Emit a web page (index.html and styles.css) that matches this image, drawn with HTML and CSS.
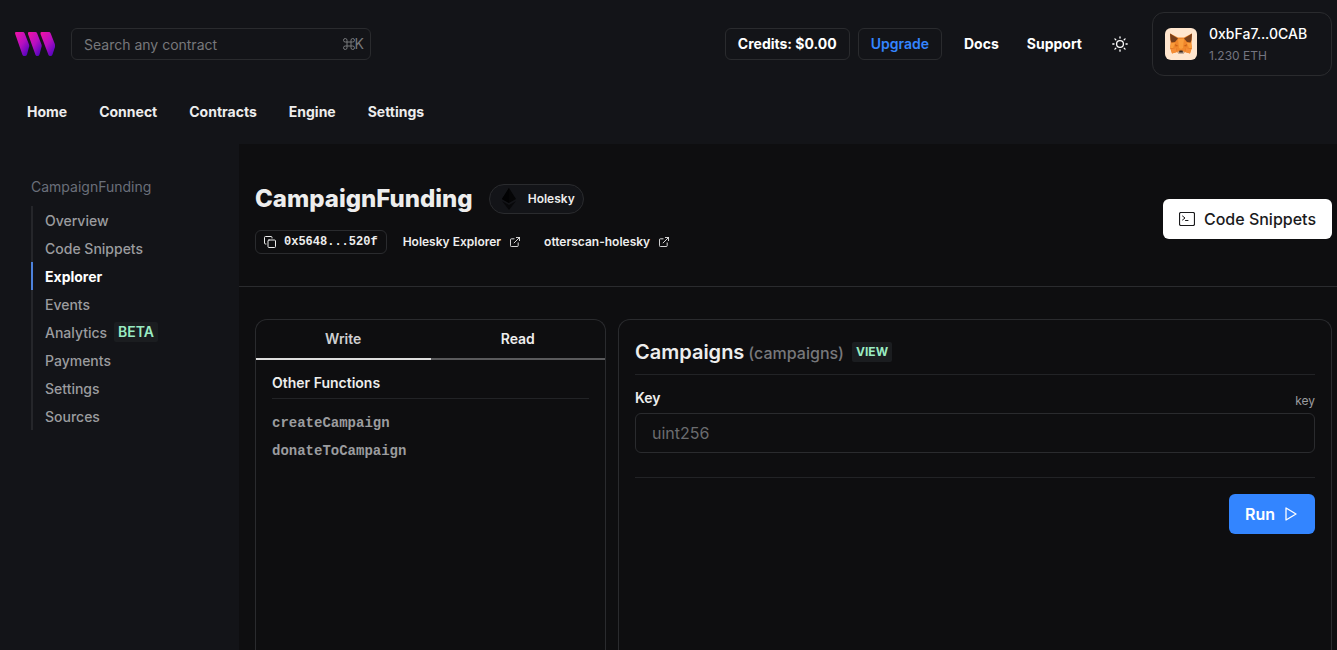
FILE: index.html
```html
<!DOCTYPE html>
<html lang="en">
<head>
<meta charset="utf-8">
<meta name="viewport" content="width=device-width, initial-scale=1">
<title>CampaignFunding | Explorer</title>
<link rel="stylesheet" href="styles.css">
</head>
<body>
<div class="page">
  <header class="topbar">
    <a class="logo" href="#" aria-label="Dashboard home">
      <svg width="40" height="24" viewBox="0 0 40 24">
        <defs>
          <linearGradient id="brand" x1="0" y1="0" x2="0.8" y2="1">
            <stop offset="0" stop-color="#f213a4"/>
            <stop offset="0.55" stop-color="#b50fc0"/>
            <stop offset="1" stop-color="#5204bf"/>
          </linearGradient>
        </defs>
        <path fill="url(#brand)" d="M1 0H8Q9 0 9.500 1L14 12.500Q14.500 14 14 15L12 22.500Q11.500 24 10 24H9Q8 24 7.500 23L0.200 2Q-0.300 0 1 0Z"/>
        <path fill="url(#brand)" d="M14 0H20.500Q21.500 0 22 1L26.500 12.500Q27 14 26.500 15L24.500 22.500Q24 24 22.500 24H22Q21 24 20.500 23L13 2Q12.500 0 14 0Z"/>
        <path fill="url(#brand)" d="M26.500 0H34Q35 0 35.500 1L40 12.500V15L37.500 22.500Q37 24 35.500 24H35Q34 24 33.500 23L25.500 2Q25 0 26.500 0Z"/>
      </svg>
    </a>
    <label class="search">
      <input class="search-input" type="text" placeholder="Search any contract" aria-label="Search any contract">
      <span class="shortcut"><svg width="12" height="12" viewBox="0 0 12 12" fill="none" stroke="currentColor"><path d="M4 4V2.250A1.750 1.750 0 1 0 2.250 4H9.750A1.750 1.750 0 1 0 8 2.250V9.750A1.750 1.750 0 1 0 9.750 8H2.250A1.750 1.750 0 1 0 4 9.750Z"/></svg>K</span>
    </label>
    <div class="actions">
      <button class="pill-button" type="button">Credits: $0.00</button>
      <button class="pill-button upgrade" type="button">Upgrade</button>
      <a class="top-link" href="#">Docs</a>
      <a class="top-link" href="#">Support</a>
      <button class="theme-toggle" type="button" aria-label="Toggle theme">
        <svg width="16" height="16" viewBox="0 0 16 16" fill="none" stroke="currentColor" stroke-width="1.300" stroke-linecap="round"><circle cx="8" cy="8" r="3.400"/><path d="M8 .8V2M8 14v1.200M.8 8H2M14 8h1.200M2.900 2.900l.9.9M12.200 12.200l.9.9M2.900 13.100l.9-.9M12.200 3.800l.9-.9"/></svg>
      </button>
      <button class="account" type="button">
        <svg class="avatar" width="32" height="32" viewBox="0 0 32 32">
          <rect width="32" height="32" rx="6" fill="#ffe6ce"/>
          <path fill="#f0872b" d="M5 5.500L13 9.500H19L27 5.500L26.500 15L27 20L25 25.500L20 24L18 26H14L12 24L7 25.500L5 20L5.500 15Z"/>
          <path fill="#763e1a" d="M5 5.500L13 10.500L10 14L6.500 14.500L5.500 12ZM27 5.500L19 10.500L22 14L25.500 14.500L26.500 12Z"/>
          <path fill="#fa9d3b" d="M13 11H19L18 20L16 21L14 20ZM6.500 15L10 15L8 20H5ZM25.500 15L22 15L24 20H27Z"/>
          <path fill="#cd6116" d="M10 16L13.500 18L10.500 18.500ZM22 16L18.500 18L21.500 18.500ZM5 20H11L12 24ZM27 20H21L20 24Z"/>
          <path fill="#f58d35" d="M6 20.500L11 20L12 24L7 25.500ZM26 20.500L21 20L20 24L25 25.500Z"/>
          <path fill="#c0ad9e" d="M12.500 23.500H19.500L18.500 26H13.500Z"/>
          <path fill="#3a2a20" d="M14.500 22.500H17.500L18 24.500H14Z"/>
        </svg>
        <span class="account-text"><span class="account-name">0xbFa7...0CAB</span><span class="account-balance">1.230 ETH</span></span>
      </button>
    </div>
  </header>

  <nav class="main-nav" aria-label="Main">
    <a href="#">Home</a><a href="#">Connect</a><a href="#">Contracts</a><a href="#">Engine</a><a href="#">Settings</a>
  </nav>

  <div class="body">
    <aside class="sidebar">
      <p class="side-title">CampaignFunding</p>
      <nav class="side-list" aria-label="Contract">
        <a href="#">Overview</a>
        <a href="#">Code Snippets</a>
        <a class="current" href="#" aria-current="page">Explorer</a>
        <a href="#">Events</a>
        <a href="#">Analytics <span class="tag beta">BETA</span></a>
        <a href="#">Payments</a>
        <a href="#">Settings</a>
        <a href="#">Sources</a>
      </nav>
    </aside>

    <main class="content">
      <section class="contract-head">
        <div class="contract-info">
          <div class="title-row">
            <h1>CampaignFunding</h1>
            <span class="chain">
              <svg width="14" height="22" viewBox="0 0 14 22"><path fill="#050506" d="M7 0L14 11L7 15L0 11Z"/><path fill="#020203" d="M7 0V15L0 11Z"/><path fill="#08080a" d="M0 13L7 17L14 13L7 22Z"/></svg>
              Holesky
            </span>
          </div>
          <div class="link-row">
            <button class="address" type="button">
              <svg width="12" height="12" viewBox="0 0 12 12" fill="none" stroke="currentColor" stroke-linecap="round" stroke-linejoin="round"><rect x="4" y="4" width="7.500" height="7.500" rx="1"/><path d="M2 8H1.500Q.5 8 .5 7V1.500Q.5.500 1.500.500H7Q8 .5 8 1.500V2"/></svg>
              0x5648...520f
            </button>
            <a class="ext-link" href="#">Holesky Explorer
              <svg width="10" height="10" viewBox="0 0 11 11" fill="none" stroke="currentColor" stroke-linecap="round" stroke-linejoin="round"><path d="M4.500 2H1.500Q.5 2 .5 3V9.500Q.5 10.500 1.500 10.500H8Q9 10.500 9 9.500V6.500M7 .5H10.500V4M10.500.500L4.500 6.500"/></svg>
            </a>
            <a class="ext-link" href="#">otterscan-holesky
              <svg width="10" height="10" viewBox="0 0 11 11" fill="none" stroke="currentColor" stroke-linecap="round" stroke-linejoin="round"><path d="M4.500 2H1.500Q.5 2 .5 3V9.500Q.5 10.500 1.500 10.500H8Q9 10.500 9 9.500V6.500M7 .5H10.500V4M10.500.500L4.500 6.500"/></svg>
            </a>
          </div>
        </div>
        <button class="snippets" type="button">
          <svg width="16" height="14" viewBox="0 0 16 14" fill="none" stroke="currentColor" stroke-linecap="round" stroke-linejoin="round"><rect x=".5" y=".5" width="15" height="13" rx="1.500" stroke-width="1.200"/><path d="M3.500 4L6 6L3.500 8M6.500 8.500H9"/></svg>
          Code Snippets
        </button>
      </section>

      <section class="explorer">
        <div class="panel functions">
          <div class="tabs" role="tablist">
            <button class="tab selected" type="button" role="tab" aria-selected="true">Write</button>
            <button class="tab" type="button" role="tab" aria-selected="false">Read</button>
          </div>
          <div class="function-list">
            <h2>Other Functions</h2>
            <a href="#">createCampaign</a>
            <a href="#">donateToCampaign</a>
          </div>
        </div>

        <form class="panel call">
          <h2 class="call-title">Campaigns <span class="signature">(campaigns)</span><span class="tag view">VIEW</span></h2>
          <div class="field-head"><label for="key">Key</label><span class="hint">key</span></div>
          <input class="key-input" id="key" type="text" placeholder="uint256">
          <div class="call-footer">
            <button class="run" type="button">Run
              <svg width="12" height="14" viewBox="0 0 12 14" fill="none" stroke="currentColor" stroke-width="1.300" stroke-linejoin="round"><path d="M1 1L11 7L1 13Z"/></svg>
            </button>
          </div>
        </form>
      </section>
    </main>
  </div>
</div>
</body>
</html>
```

FILE: styles.css
```css
:root {
  --bar: #131418;
  --canvas: #0e0e10;
  --line: #2a2b2e;
  --text: #ededed;
  --muted: #9b9c9f;
  --blue: #3385ff;
  --mono: "Liberation Mono", "DejaVu Sans Mono", monospace;
}

* { box-sizing: border-box; }

body {
  margin: 0;
  background: var(--bar);
  color: var(--text);
  font: 14px/20px Inter, "Liberation Sans", sans-serif;
}

a { color: inherit; text-decoration: none; }
button, input { font: inherit; color: inherit; }
button { cursor: pointer; }
svg { display: block; flex: none; }
h1, h2, p { margin: 0; }

.page { display: flex; flex-direction: column; min-height: 100vh; }

.topbar { display: flex; align-items: center; gap: 16px; padding: 12px 5px 12px 15px; }
.search {
  display: flex;
  align-items: center;
  width: 300px;
  height: 32px;
  padding: 0 6px 0 12px;
  border: 1px solid var(--line);
  border-radius: 6px;
}
.search-input { flex: 1; min-width: 0; padding: 2px 0 0; border: 0; outline: 0; background: none; }
.search-input::placeholder { color: #77787b; opacity: 1; }
.shortcut { display: flex; align-items: center; color: #77787b; }

.actions { display: flex; align-items: center; margin-left: auto; font-weight: 700; color: #fff; }
.pill-button {
  height: 32px;
  margin-right: 8px;
  padding: 0 12px;
  border: 1px solid var(--line);
  border-radius: 6px;
  background: none;
}
.upgrade { color: var(--blue); font-weight: 600; }
.top-link { padding: 0 14px; }
.theme-toggle { margin: 0 24px 0 16px; padding: 0; border: 0; background: none; }
.account {
  display: flex;
  align-items: center;
  gap: 12px;
  width: 180px;
  height: 64px;
  padding: 2px 12px 0;
  border: 1px solid var(--line);
  border-radius: 12px;
  background: none;
  text-align: left;
}
.avatar { margin-bottom: 2px; }
.account-text { display: flex; flex-direction: column; gap: 2px; }
.account-name { font-weight: 500; }
.account-balance { font-size: 12px; font-weight: 400; color: #737580; }

.main-nav { display: flex; gap: 32px; padding: 14px 27px 22px; font-weight: 700; }

.body { flex: 1; display: flex; }
.sidebar { flex: none; width: 239px; padding: 33px 31px 0; }
.side-title { color: #6a6f7a; }
.side-list { display: flex; flex-direction: column; margin-top: 9px; font-weight: 500; color: var(--muted); }
.side-list a {
  display: flex;
  align-items: center;
  gap: 7px;
  height: 28px;
  padding: 2px 0 0 12px;
  border-left: 2px solid #25262a;
}
.side-list .current { border-color: #4d82dc; color: #fff; font-weight: 700; }
.tag { background: #1b1d20; border-radius: 2px; color: #9aebc2; font-weight: 600; }
.beta { margin-bottom: 2px; padding: 0 4px; }

.content { flex: 1; min-width: 0; display: flex; flex-direction: column; background: var(--canvas); }
.contract-head {
  display: flex;
  align-items: center;
  justify-content: space-between;
  padding: 40px 5px 32px 16px;
  border-bottom: 1px solid var(--line);
}
.title-row { display: flex; align-items: center; gap: 16px; }
h1 { font-size: 24px; line-height: 30px; font-weight: 800; }
.chain {
  display: flex;
  align-items: center;
  gap: 12px;
  height: 30px;
  padding: 0 8px 0 12px;
  border: 1px solid var(--line);
  border-radius: 15px;
  background: var(--bar);
  font-size: 12px;
  font-weight: 600;
}
.link-row { display: flex; align-items: center; gap: 24px; margin-top: 16px; font-size: 12px; font-weight: 600; }
.address {
  display: flex;
  align-items: center;
  gap: 8px;
  height: 24px;
  margin-right: -8px;
  padding: 0 8px;
  border: 1px solid var(--line);
  border-radius: 6px;
  background: none;
  font-family: var(--mono);
}
.ext-link { display: flex; align-items: center; gap: 9px; }
.snippets {
  display: flex;
  align-items: center;
  gap: 9px;
  height: 40px;
  padding: 0 16px;
  border: 0;
  border-radius: 6px;
  background: #fff;
  color: #1a1a1c;
  font-size: 16px;
  font-weight: 500;
}

.explorer {
  flex: 1;
  display: grid;
  grid-template-columns: repeat(12, minmax(0, 1fr));
  gap: 12px;
  padding: 32px 5px 0 16px;
}
.panel { border: 1px solid var(--line); border-bottom: 0; border-radius: 12px 12px 0 0; }
.functions { grid-column: span 4; }
.call { grid-column: span 8; padding: 17px 16px 0; }

.tabs { display: flex; }
.tab {
  flex: 1;
  height: 40px;
  padding: 0;
  border: 0;
  border-bottom: 2px solid #5a5a5c;
  background: none;
  font-weight: 600;
}
.tab.selected { border-color: #dedede; color: #cfcfd0; }
.function-list { display: flex; flex-direction: column; padding: 13px 16px; }
.function-list h2 {
  margin-bottom: 10px;
  padding-bottom: 5px;
  border-bottom: 1px solid #222326;
  font-size: 14px;
  line-height: 20px;
  font-weight: 600;
}
.function-list a { font: 700 14px/28px var(--mono); color: var(--muted); }

.call-title {
  display: flex;
  align-items: center;
  padding-bottom: 7px;
  border-bottom: 1px solid #222326;
  font-size: 20px;
  line-height: 30px;
  font-weight: 600;
}
.signature { margin-left: 4px; padding-top: 2px; font-size: 16px; line-height: 28px; font-weight: 500; color: #77787b; }
.view { margin-left: 8px; padding: 0 4px; font-size: 12px; line-height: 20px; font-weight: 700; }
.field-head { display: flex; justify-content: space-between; align-items: end; margin: 13px 0 5px; }
.field-head label { font-weight: 600; }
.hint { font-size: 12px; line-height: 15px; color: var(--muted); }
.key-input {
  display: block;
  width: 100%;
  height: 40px;
  padding: 0 16px;
  border: 1px solid var(--line);
  border-radius: 6px;
  background: none;
  font-size: 16px;
}
.key-input::placeholder { color: #6b6c6f; opacity: 1; }
.call-footer { display: flex; justify-content: end; margin-top: 24px; padding-top: 16px; border-top: 1px solid #222326; }
.run {
  display: flex;
  align-items: center;
  gap: 10px;
  height: 40px;
  padding: 0 18px 0 16px;
  border: 0;
  border-radius: 6px;
  background: var(--blue);
  color: #fff;
  font-size: 16px;
  font-weight: 600;
}
```
